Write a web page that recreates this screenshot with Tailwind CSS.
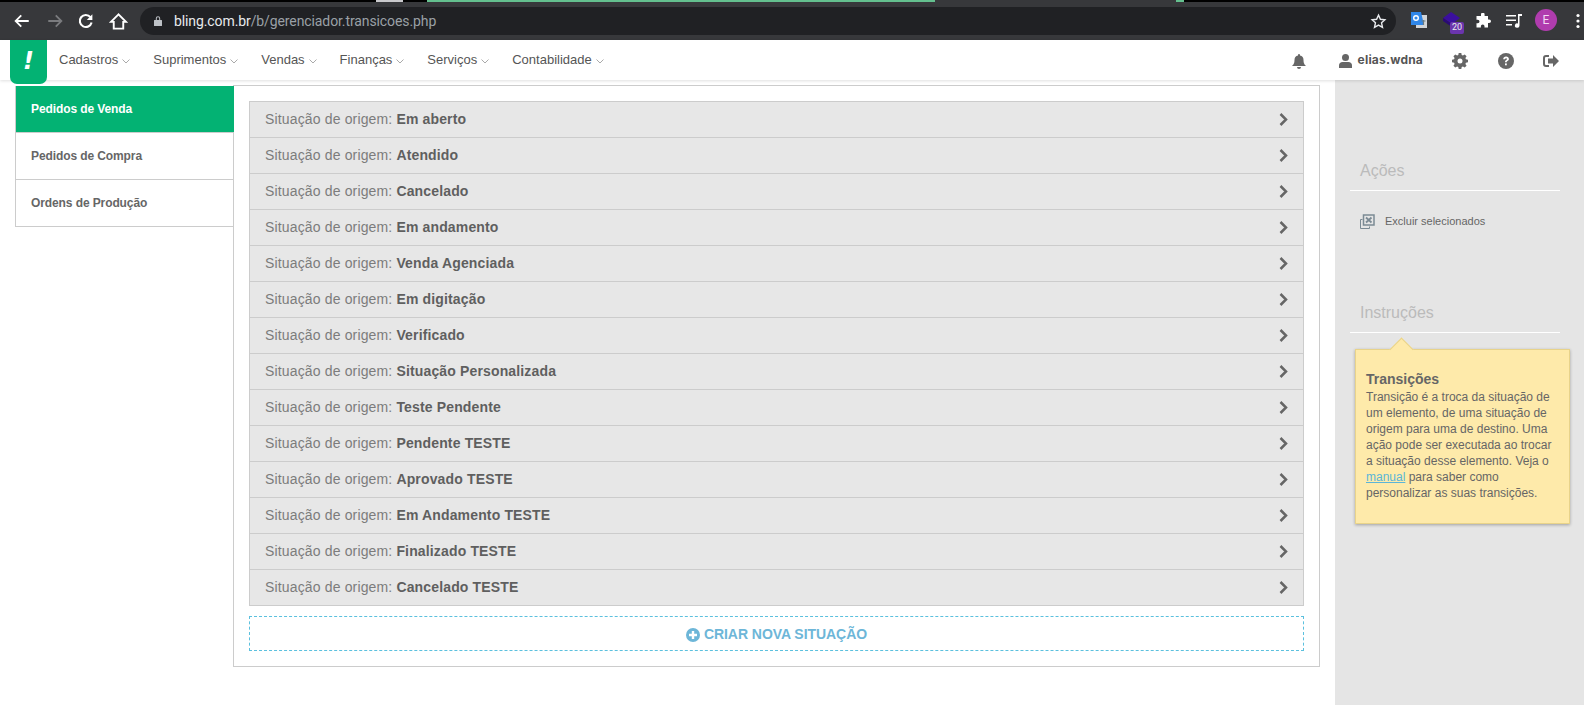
<!doctype html>
<html>
<head>
<meta charset="utf-8">
<script src="https://cdn.jsdelivr.net/npm/@tailwindcss/browser@4"></script>
</head>
<body class="bg-white font-['Liberation_Sans',Arial,sans-serif] text-[#666]">
<div class="flex h-[705px] w-[1584px] flex-col overflow-hidden">

  <!-- browser chrome -->
  <header class="relative flex h-[40px] shrink-0 items-center bg-[#37383b] pt-[2px]">
    <div class="absolute left-0 right-0 top-0 flex h-[2px] bg-black">
      <div class="ml-[376px] h-[2px] w-[27px] bg-[#c9c9cc]"></div>
      <div class="ml-[24px] h-[2px] w-[508px] bg-[#64c08f]"></div>
      <div class="h-[2px] w-[241px] bg-[#37383b]"></div>
      <div class="h-[2px] w-[8px] bg-[#64c08f]"></div>
    </div>
    <div class="flex w-[140px] items-center pl-[13px]">
      <svg class="h-[18px] w-[18px]" viewBox="0 0 24 24" fill="none" stroke="#fff" stroke-width="2.4"><path d="M21 12H4M11 4.5 3.5 12l7.500 7.500"/></svg>
      <svg class="ml-[15px] h-[18px] w-[18px]" viewBox="0 0 24 24" fill="none" stroke="#7a7b7e" stroke-width="2.4"><path d="M3 12h17M13 4.500l7.500 7.500-7.500 7.500"/></svg>
      <svg class="ml-[13px] h-[18px] w-[18px]" viewBox="0 0 24 24" fill="none" stroke="#fff" stroke-width="2.800"><path d="M19.500 14a8 8 0 1 1-1.600-7.200"/><path d="M20.500 3v7.500H13z" fill="#fff" stroke="none"/></svg>
      <svg class="ml-[14px] h-[19px] w-[19px]" viewBox="0 0 24 24" fill="none" stroke="#fff" stroke-width="2.400"><path d="M12 3 2.500 12.500H6V21h12v-8.500h3.500z" stroke-linejoin="miter"/></svg>
    </div>
    <div class="flex h-[28px] w-[1256px] items-center rounded-full bg-[#202124] pl-[12px] pr-[9px]">
      <svg class="h-[12px] w-[12px]" viewBox="0 0 12 12" fill="#bdc1c6"><path d="M2.500 5h7a.5.5 0 0 1 .5.500v5a.5.5 0 0 1-.5.500h-7a.5.5 0 0 1-.5-.500v-5a.5.5 0 0 1 .5-.500zM3.800 5V3.500a2.200 2.200 0 0 1 4.400 0V5H7.200V3.500a1.200 1.200 0 0 0-2.400 0V5z"/></svg>
      <span class="ml-[10px] font-['Roboto',sans-serif] text-[14px] tracking-[-0.1px] text-[#e8eaed]">bling.com.br<span class="text-[#9aa0a6]">/b/gerenciador.transicoes.php</span></span>
      <svg class="ml-auto h-[17px] w-[17px]" viewBox="0 0 24 24" fill="none" stroke="#e8eaed" stroke-width="2"><path d="m12 3 2.700 5.900 6.300.7-4.700 4.300 1.300 6.300L12 17l-5.600 3.200 1.300-6.300L3 9.600l6.300-.7z"/></svg>
    </div>
    <div class="relative flex-1">
      <svg class="absolute left-[14px] top-[-10px] h-[18px] w-[17px]" viewBox="0 0 17 18"><rect x="6" y="4" width="11" height="13" fill="#d2d5d8"/><path d="M1 1h10l3 13H1z" fill="#2f86e8"/><circle cx="6" cy="7" r="2.300" fill="none" stroke="#fff" stroke-width="1.400"/><path d="M11.500 10h4M13.500 9v5" stroke="#6a7b83" stroke-width="1.200"/></svg>
      <svg class="absolute left-[46px] top-[-9px] h-[15px] w-[18px]" viewBox="0 0 18 15"><path d="M9 0l9 6-8 6-9-6z" fill="#3b0f9e"/><path d="M1 6l9 6v3L1 9z" fill="#2a0a74"/></svg>
      <span class="absolute left-[54px] top-[1px] flex h-[12px] w-[14px] items-center justify-center rounded-[2px] bg-[#6b35ad] font-['Roboto',sans-serif] text-[9px] text-[#e8eaed]">20</span>
      <svg class="absolute left-[79px] top-[-8px] h-[16px] w-[16px]" viewBox="0 0 16 16" fill="#fff"><path d="M6 1.500a1.800 1.800 0 0 1 3.600 0V3H13v3.400h1.200a1.800 1.800 0 0 1 0 3.600H13v4.500H9.500v-1.300a1.800 1.800 0 0 0-3.600 0v1.300H1.500v-4.200h1.200a1.800 1.800 0 0 0 0-3.600H1.500V3H6z"/></svg>
      <svg class="absolute left-[110px] top-[-8px] h-[16px] w-[17px]" viewBox="0 0 17 16" fill="#fff"><path d="M0 2h10v1.500H0zM0 6.500h10V8H0zM0 11h6v1.500H0zM12 1h4v2h-2.500v9.500a2.300 2.300 0 1 1-1.500-2.100z"/></svg>
      <span class="absolute left-[139px] top-[-12px] flex h-[22px] w-[22px] items-center justify-center rounded-full bg-[#b03cae] font-['Roboto',sans-serif] text-[12px] text-[#f3d9f3]">E</span>
      <svg class="absolute left-[180px] top-[-8px] h-[16px] w-[4px]" viewBox="0 0 4 16" fill="#fff"><circle cx="2" cy="2.500" r="1.600"/><circle cx="2" cy="8" r="1.600"/><circle cx="2" cy="13.500" r="1.600"/></svg>
    </div>
  </header>

  <!-- application nav -->
  <nav class="relative z-10 flex h-[40px] shrink-0 items-center bg-white pl-[10px] shadow-[0_1px_3px_rgba(0,0,0,0.13)]">
    <div class="absolute left-[10px] top-0 flex h-[44px] w-[37px] items-center justify-center rounded-b-[7px] bg-[#03b273] pb-[3px] font-['DejaVu_Sans',sans-serif] text-[24px] font-bold italic leading-none text-white">!</div>
    <ul class="ml-[49px] flex items-center gap-[23px] text-[13px] text-[#555]">
      <li class="flex items-center gap-[4px]">Cadastros<svg class="mt-[2px] h-[5px] w-[8px]" viewBox="0 0 8 5" fill="none" stroke="#aaa"><path d="m.5.500 3.500 3.500L7.500.5"/></svg></li>
      <li class="flex items-center gap-[4px]">Suprimentos<svg class="mt-[2px] h-[5px] w-[8px]" viewBox="0 0 8 5" fill="none" stroke="#aaa"><path d="m.5.500 3.500 3.500L7.500.5"/></svg></li>
      <li class="flex items-center gap-[4px]">Vendas<svg class="mt-[2px] h-[5px] w-[8px]" viewBox="0 0 8 5" fill="none" stroke="#aaa"><path d="m.5.500 3.500 3.500L7.500.5"/></svg></li>
      <li class="flex items-center gap-[4px]">Finanças<svg class="mt-[2px] h-[5px] w-[8px]" viewBox="0 0 8 5" fill="none" stroke="#aaa"><path d="m.5.500 3.500 3.500L7.500.5"/></svg></li>
      <li class="flex items-center gap-[4px]">Serviços<svg class="mt-[2px] h-[5px] w-[8px]" viewBox="0 0 8 5" fill="none" stroke="#aaa"><path d="m.5.500 3.500 3.500L7.500.5"/></svg></li>
      <li class="flex items-center gap-[4px]">Contabilidade<svg class="mt-[2px] h-[5px] w-[8px]" viewBox="0 0 8 5" fill="none" stroke="#aaa"><path d="m.5.500 3.500 3.500L7.500.5"/></svg></li>
    </ul>
    <div class="ml-auto flex items-center">
      <svg class="mt-[2px] h-[15px] w-[14px]" viewBox="0 0 14 15" fill="#666"><path d="M7 0a1 1 0 0 1 1 1v.6A4.500 4.500 0 0 1 11.500 6c0 3.800 1.500 5 2.500 6H0c1-1 2.500-2.200 2.500-6A4.500 4.500 0 0 1 6 1.600V1a1 1 0 0 1 1-1zM5 13h4a2 2 0 0 1-4 0z"/></svg>
      <svg class="ml-[33px] mt-[2px] h-[14px] w-[13px]" viewBox="0 0 13 14" fill="#666"><circle cx="6.500" cy="3.500" r="3.500"/><path d="M0 14v-2.500C0 9.500 1.500 8 3.500 8h6c2 0 3.500 1.500 3.500 3.500V14z"/></svg>
      <span class="ml-[6px] mb-[1px] font-['Inter',sans-serif] text-[12px] font-bold tracking-[0.2px] text-[#555]">elias.wdna</span>
      <svg class="ml-[29px] mt-[1px] h-[16px] w-[16px]" viewBox="0 0 16 16" fill="#666"><path fill-rule="evenodd" d="M6.700 0h2.600l.4 2.100 1.200.5L12.700 1.400l1.900 1.900-1.200 1.800.5 1.200 2.100.4v2.600l-2.100.4-.5 1.200 1.200 1.800-1.900 1.900-1.800-1.200-1.200.5-.4 2.100H6.700l-.4-2.100-1.200-.5-1.800 1.200-1.900-1.900 1.200-1.800-.5-1.200L0 9.300V6.700l2.100-.4.5-1.200-1.200-1.800 1.900-1.900 1.800 1.200 1.200-.5zM8 5.500a2.500 2.500 0 1 0 0 5 2.500 2.500 0 0 0 0-5z"/></svg>
      <svg class="ml-[30px] mt-[1px] h-[16px] w-[16px]" viewBox="0 0 16 16"><circle cx="8" cy="8" r="8" fill="#666"/><path d="M5.200 6.200C5.300 4.500 6.500 3.500 8.100 3.500c1.600 0 2.800 1 2.800 2.400 0 1.200-.7 1.700-1.400 2.200-.6.400-.7.600-.7 1.200H7c0-1.100.3-1.600 1.100-2.200.6-.4.900-.7.900-1.100 0-.5-.4-.8-.9-.8-.6 0-1 .4-1.100 1z" fill="#fff"/><rect x="7" y="10.400" width="1.800" height="1.900" fill="#fff"/></svg>
      <svg class="ml-[29px] mr-[25px] mt-[1px] h-[14px] w-[16px]" viewBox="0 0 16 14" fill="#666"><path d="M6 1H3a3 3 0 0 0-3 3v6a3 3 0 0 0 3 3h3v-2H3a1 1 0 0 1-1-1V4a1 1 0 0 1 1-1h3z"/><path d="M10 1l6 6-6 6V9.500H5v-5h5z"/></svg>
    </div>
  </nav>

  <div class="flex min-h-0 flex-1">
    <!-- main -->
    <main class="flex w-[1335px] items-start pl-[15px] pt-[5px]">
      <div class="relative z-10 mt-[1px] w-[218px] shrink-0 border-b border-l border-[#ccc] text-[12px] font-bold tracking-[-0.1px]">
        <a class="-mr-px flex h-[46px] items-center bg-[#03b273] pl-[15px] pb-[1px] text-white">Pedidos de Venda</a>
        <a class="flex h-[47px] items-center border-t border-[#ccc] pl-[15px] pb-[1px] text-[#666]">Pedidos de Compra</a>
        <a class="flex h-[47px] items-center border-t border-[#ccc] pl-[15px] pb-[1px] text-[#666]">Ordens de Produção</a>
      </div>
      <section class="h-[582px] w-[1087px] shrink-0 border border-[#ccc] px-[15px] pt-[15px]">
        <ul class="border-b border-[#ccc]">
          <li class="flex h-[36px] items-center border border-b-0 border-[#ccc] bg-[#e7e7e7] pl-[15px] pr-[15px] text-[14px] tracking-[0.15px] text-[#7c7c7c]"><span>Situação de origem: <b class="text-[#5f5f5f]">Em aberto</b></span><svg class="ml-auto h-[13px] w-[9px]" viewBox="0 0 9 13" fill="none" stroke="#666" stroke-width="2.500"><path d="m1.500 1 5.500 5.500L1.500 12"/></svg></li>
          <li class="flex h-[36px] items-center border border-b-0 border-[#ccc] bg-[#e7e7e7] pl-[15px] pr-[15px] text-[14px] tracking-[0.15px] text-[#7c7c7c]"><span>Situação de origem: <b class="text-[#5f5f5f]">Atendido</b></span><svg class="ml-auto h-[13px] w-[9px]" viewBox="0 0 9 13" fill="none" stroke="#666" stroke-width="2.500"><path d="m1.500 1 5.500 5.500L1.500 12"/></svg></li>
          <li class="flex h-[36px] items-center border border-b-0 border-[#ccc] bg-[#e7e7e7] pl-[15px] pr-[15px] text-[14px] tracking-[0.15px] text-[#7c7c7c]"><span>Situação de origem: <b class="text-[#5f5f5f]">Cancelado</b></span><svg class="ml-auto h-[13px] w-[9px]" viewBox="0 0 9 13" fill="none" stroke="#666" stroke-width="2.500"><path d="m1.500 1 5.500 5.500L1.500 12"/></svg></li>
          <li class="flex h-[36px] items-center border border-b-0 border-[#ccc] bg-[#e7e7e7] pl-[15px] pr-[15px] text-[14px] tracking-[0.15px] text-[#7c7c7c]"><span>Situação de origem: <b class="text-[#5f5f5f]">Em andamento</b></span><svg class="ml-auto h-[13px] w-[9px]" viewBox="0 0 9 13" fill="none" stroke="#666" stroke-width="2.500"><path d="m1.500 1 5.500 5.500L1.500 12"/></svg></li>
          <li class="flex h-[36px] items-center border border-b-0 border-[#ccc] bg-[#e7e7e7] pl-[15px] pr-[15px] text-[14px] tracking-[0.15px] text-[#7c7c7c]"><span>Situação de origem: <b class="text-[#5f5f5f]">Venda Agenciada</b></span><svg class="ml-auto h-[13px] w-[9px]" viewBox="0 0 9 13" fill="none" stroke="#666" stroke-width="2.500"><path d="m1.500 1 5.500 5.500L1.500 12"/></svg></li>
          <li class="flex h-[36px] items-center border border-b-0 border-[#ccc] bg-[#e7e7e7] pl-[15px] pr-[15px] text-[14px] tracking-[0.15px] text-[#7c7c7c]"><span>Situação de origem: <b class="text-[#5f5f5f]">Em digitação</b></span><svg class="ml-auto h-[13px] w-[9px]" viewBox="0 0 9 13" fill="none" stroke="#666" stroke-width="2.500"><path d="m1.500 1 5.500 5.500L1.500 12"/></svg></li>
          <li class="flex h-[36px] items-center border border-b-0 border-[#ccc] bg-[#e7e7e7] pl-[15px] pr-[15px] text-[14px] tracking-[0.15px] text-[#7c7c7c]"><span>Situação de origem: <b class="text-[#5f5f5f]">Verificado</b></span><svg class="ml-auto h-[13px] w-[9px]" viewBox="0 0 9 13" fill="none" stroke="#666" stroke-width="2.500"><path d="m1.500 1 5.500 5.500L1.500 12"/></svg></li>
          <li class="flex h-[36px] items-center border border-b-0 border-[#ccc] bg-[#e7e7e7] pl-[15px] pr-[15px] text-[14px] tracking-[0.15px] text-[#7c7c7c]"><span>Situação de origem: <b class="text-[#5f5f5f]">Situação Personalizada</b></span><svg class="ml-auto h-[13px] w-[9px]" viewBox="0 0 9 13" fill="none" stroke="#666" stroke-width="2.500"><path d="m1.500 1 5.500 5.500L1.500 12"/></svg></li>
          <li class="flex h-[36px] items-center border border-b-0 border-[#ccc] bg-[#e7e7e7] pl-[15px] pr-[15px] text-[14px] tracking-[0.15px] text-[#7c7c7c]"><span>Situação de origem: <b class="text-[#5f5f5f]">Teste Pendente</b></span><svg class="ml-auto h-[13px] w-[9px]" viewBox="0 0 9 13" fill="none" stroke="#666" stroke-width="2.500"><path d="m1.500 1 5.500 5.500L1.500 12"/></svg></li>
          <li class="flex h-[36px] items-center border border-b-0 border-[#ccc] bg-[#e7e7e7] pl-[15px] pr-[15px] text-[14px] tracking-[0.15px] text-[#7c7c7c]"><span>Situação de origem: <b class="text-[#5f5f5f]">Pendente TESTE</b></span><svg class="ml-auto h-[13px] w-[9px]" viewBox="0 0 9 13" fill="none" stroke="#666" stroke-width="2.500"><path d="m1.500 1 5.500 5.500L1.500 12"/></svg></li>
          <li class="flex h-[36px] items-center border border-b-0 border-[#ccc] bg-[#e7e7e7] pl-[15px] pr-[15px] text-[14px] tracking-[0.15px] text-[#7c7c7c]"><span>Situação de origem: <b class="text-[#5f5f5f]">Aprovado TESTE</b></span><svg class="ml-auto h-[13px] w-[9px]" viewBox="0 0 9 13" fill="none" stroke="#666" stroke-width="2.500"><path d="m1.500 1 5.500 5.500L1.500 12"/></svg></li>
          <li class="flex h-[36px] items-center border border-b-0 border-[#ccc] bg-[#e7e7e7] pl-[15px] pr-[15px] text-[14px] tracking-[0.15px] text-[#7c7c7c]"><span>Situação de origem: <b class="text-[#5f5f5f]">Em Andamento TESTE</b></span><svg class="ml-auto h-[13px] w-[9px]" viewBox="0 0 9 13" fill="none" stroke="#666" stroke-width="2.500"><path d="m1.500 1 5.500 5.500L1.500 12"/></svg></li>
          <li class="flex h-[36px] items-center border border-b-0 border-[#ccc] bg-[#e7e7e7] pl-[15px] pr-[15px] text-[14px] tracking-[0.15px] text-[#7c7c7c]"><span>Situação de origem: <b class="text-[#5f5f5f]">Finalizado TESTE</b></span><svg class="ml-auto h-[13px] w-[9px]" viewBox="0 0 9 13" fill="none" stroke="#666" stroke-width="2.500"><path d="m1.500 1 5.500 5.500L1.500 12"/></svg></li>
          <li class="flex h-[36px] items-center border border-b-0 border-[#ccc] bg-[#e7e7e7] pl-[15px] pr-[15px] text-[14px] tracking-[0.15px] text-[#7c7c7c]"><span>Situação de origem: <b class="text-[#5f5f5f]">Cancelado TESTE</b></span><svg class="ml-auto h-[13px] w-[9px]" viewBox="0 0 9 13" fill="none" stroke="#666" stroke-width="2.500"><path d="m1.500 1 5.500 5.500L1.500 12"/></svg></li>
        </ul>
        <a class="mt-[10px] flex h-[35px] items-center justify-center gap-[4px] border border-dashed border-[#5bc0de] pt-[2px] text-[14px] font-bold tracking-[-0.05px] text-[#6db6d8]">
          <svg class="h-[14px] w-[14px]" viewBox="0 0 14 14"><circle cx="7" cy="7" r="7" fill="#6db6d8"/><path d="M3 5.800h2.800V3h2.400v2.800H11v2.400H8.200V11H5.800V8.200H3z" fill="#fff"/></svg>
          CRIAR NOVA SITUAÇÃO
        </a>
      </section>
    </main>

    <!-- right rail -->
    <aside class="w-[249px] shrink-0 bg-[#e5e5e5] pl-[15px] pr-[24px] pt-[80px]">
      <h3 class="h-[31px] border-b border-white pl-[10px] text-[16px] leading-[22px] text-[#bbb]">Ações</h3>
      <div class="ml-[10px] mt-[22px] flex h-[16px] items-center gap-[10px] text-[11px] text-[#666]">
        <svg class="h-[15px] w-[15px]" viewBox="0 0 15 15" fill="none" stroke="#7b8a94"><path d="M2.500 5.500h-2v9h9v-2"/><rect x="3.500" y="1" width="10.500" height="10" stroke-width="1.500"/><path d="m6 3.500 5.500 5m0-5-5.500 5" stroke-width="1.800"/></svg>
        <span>Excluir selecionados</span>
      </div>
      <h3 class="mt-[72px] h-[32px] border-b border-white pl-[10px] text-[16px] leading-[24px] text-[#bbb]">Instruções</h3>
      <div class="relative ml-[5px] mt-[16px] h-[175px] w-[215px] border border-[#e8d38a] bg-[#feeaaa] pl-[10px] pt-[19px] text-[#666] shadow-[0_1px_3px_rgba(0,0,0,0.3)]">
        <div class="absolute left-[37px] top-[-9px] h-[17px] w-[17px] rotate-45 border-l border-t border-[#e8d38a] bg-[#feeaaa]"></div>
        <h4 class="relative text-[14px] font-bold leading-[20px]">Transições</h4>
        <p class="relative pr-[8px] text-[12px] leading-[16px]">Transição é a troca da situação de um elemento, de uma situação de origem para uma de destino. Uma ação pode ser executada ao trocar a situação desse elemento. Veja o <a class="text-[#5bb5d8] underline">manual</a> para saber como personalizar as suas transições.</p>
      </div>
    </aside>
  </div>
</div>
</body>
</html>
